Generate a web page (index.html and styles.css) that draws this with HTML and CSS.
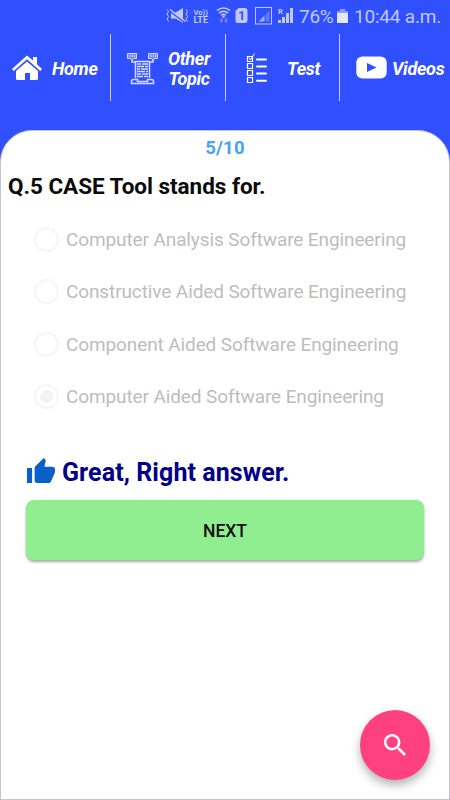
FILE: index.html
```html
<!DOCTYPE html>
<html lang="en">
<head>
<meta charset="utf-8">
<title>Quiz</title>
<link rel="stylesheet" href="styles.css">
</head>
<body>
<div class="screen">
  <header class="status">
    <svg class="status-icons" width="132" height="32" viewBox="0 0 132 32">
      <g fill="currentColor">
        <path d="M6 12.500h4.500L18 8v15l-7.500-4.500H6z"/>
        <text x="28.500" y="15" font-size="7" font-weight="700" textLength="14.500" lengthAdjust="spacingAndGlyphs">Vo))</text>
        <text x="28.500" y="23.300" font-size="8.200" font-weight="700" textLength="14.500" lengthAdjust="spacingAndGlyphs">LTE</text>
        <path d="M73 8h6q3 0 3 3v9q0 3-3 3h-7q-2 0-2-2V11z" transform="translate(.5 0)"/>
        <text x="113" y="14" font-size="7.500" font-weight="700">R</text>
        <path d="M113 20h3v3h-3zM117 17h3v6h-3zM121 13h3v10h-3zM125 8h3v15h-3z"/>
        <path d="M104.500 21.500V10.500l-4 4v7z" opacity=".35"/>
        <path d="M99.500 15.500l-6 6h6z" opacity=".8"/>
        <path d="M56.500 18l2 2.500h-1.300V23h-1.400v-2.500h-1.300zM61 23l2-2.500h-1.300V18h-1.400v2.500H59z" opacity=".5"/>
        <circle cx="58.500" cy="16.500" r="1.200"/>
      </g>
      <path d="M4.500 11L19 22" stroke="#304ffe" stroke-width="1.500"/>
      <path d="M5 9.500L20.500 21.500" fill="none" stroke="currentColor" stroke-width="1.400"/>
      <path d="M2 9.500l1.500 2L2 14l1.500 2.500L2 19l1.500 2.500M21 9.500l1.500 2L21 14l1.500 2.500L21 19l1.500 2.500" fill="none" stroke="currentColor"/>
      <path d="M52 10.500q6.500-5 13 0M54 13q4.500-3.500 9 0" fill="none" stroke="currentColor" stroke-width="1.600"/>
      <path d="M56 15.300q2.500-2 5 0" fill="none" stroke="currentColor" stroke-width="1.400"/>
      <rect x="90.500" y="7.500" width="16" height="16.500" fill="none" stroke="currentColor"/>
      <text x="73.200" y="20" font-size="12" font-weight="700" fill="#304ffe">1</text>
    </svg>
    <span class="percent">76%</span>
    <svg class="battery" width="11" height="16" viewBox="0 0 11 16"><path d="M3 1h5v2h3v2H0V3h3z" fill="#8d9fff"/><path d="M0 5h11v10H0z" fill="#e4e8ff"/></svg>
    <span class="clock">10:44 a.m.</span>
  </header>
  <nav class="nav">
    <a class="tab home">
      <svg width="32" height="28" viewBox="0 0 32 28" fill="#fff"><path d="M1 15L16 1.500l6 5V3h4v7.200l5 4.800-1.700 2L16 5.200 2.700 17z"/><path d="M5 17L16 7.500 27 17v7.500q0 1.500-1.500 1.500H19v-7h-5v7H6.500Q5 26 5 24.500z"/></svg>
      <span>Home</span>
    </a>
    <a class="tab topic">
      <svg width="32" height="34" viewBox="0 0 32 34" fill="none" stroke="#d5dcff">
        <path d="M1.500 2.500h9v5h-3l-1.500 2-1.500-2h-3zM22.500 2.500h9v5h-3l-1.500 2-1.500-2h-3z" fill="#7186ff"/>
        <path d="M3.500 5h1M6 5h1M8 5h1M24.500 5h1M27 5h1M29 5h1" stroke-width="2"/>
        <path d="M6 9v2h3M27 9v2h-3M9.500 27V10.500h14V27M5.500 32.500v-2q0-2 2-2h4v2h10v-2h4q2 0 2 2v2z" stroke-width="1.500"/>
        <path d="M11 13h4m1 0h6M11 15.500h7m1 0h3M11 18h3m1 0h7M11 20.500h8m1 0h2M11 23h4m1 0h6M11 25.500h6m1 0h4" stroke-width="1.300"/>
      </svg>
      <span>Other<br>Topic</span>
    </a>
    <a class="tab test">
      <svg width="22" height="34" viewBox="0 0 22 34" fill="none" stroke="#fff">
        <path d="M1.500 5.500h5v5h-5zM1.500 12.500h5v5h-5zM1.500 19.500h5v5h-5zM1.500 26.500h5v5h-5z" stroke-width="1.200"/>
        <path d="M3 6.500l1.500 2.500L8.500 2.500"/>
        <path d="M11 8.500h9M11 15.500h9M11 22.500h9M11 29.700h9" stroke-width="2" stroke-linecap="round"/>
      </svg>
      <span>Test</span>
    </a>
    <a class="tab videos">
      <svg width="31" height="23" viewBox="0 0 31 23"><rect x=".3" y=".5" width="30.400" height="22" rx="6" fill="#fff"/><path d="M11 7l9.500 4.500L11 16z" fill="#304ffe"/></svg>
      <span>Videos</span>
    </a>
  </nav>
  <main class="card">
    <div class="progress">5/10</div>
    <h1 class="question">Q.5 CASE Tool stands for.</h1>
    <ul class="options">
      <li><i class="radio"></i><span>Computer Analysis Software Engineering</span></li>
      <li><i class="radio"></i><span>Constructive Aided Software Engineering</span></li>
      <li><i class="radio"></i><span>Component Aided Software Engineering</span></li>
      <li><i class="radio checked"></i><span>Computer Aided Software Engineering</span></li>
    </ul>
    <div class="result">
      <svg width="28" height="25" viewBox="1 1 22 20" preserveAspectRatio="none" fill="#0860c8"><path d="M1 21h4V9H1v12zm22-11c0-1.100-.9-2-2-2h-6.310l.95-4.570.03-.32c0-.41-.17-.79-.44-1.060L14.170 1 7.590 7.590C7.220 7.950 7 8.450 7 9v10c0 1.100.9 2 2 2h9c.83 0 1.540-.5 1.840-1.220l3.020-7.050c.09-.23.14-.47.14-.73v-2z"/></svg>
      <span>Great, Right answer.</span>
    </div>
    <button class="next">NEXT</button>
  </main>
  <button class="fab" aria-label="Search">
    <svg width="22" height="22" viewBox="3 3 17.500 17.500" fill="#fff"><path d="M15.500 14h-.79l-.28-.27C15.410 12.590 16 11.110 16 9.500 16 5.910 13.090 3 9.500 3S3 5.910 3 9.500 5.910 16 9.500 16c1.610 0 3.090-.59 4.230-1.570l.27.28v.79l5 4.990L20.490 19l-4.990-5zm-6 0C7.010 14 5 11.990 5 9.500S7.010 5 9.500 5 14 7.010 14 9.500 11.990 14 9.500 14z"/></svg>
  </button>
</div>
</body>
</html>
```

FILE: styles.css
```css
* { box-sizing: border-box; }
body { margin: 0; font-family: Roboto, "Liberation Sans", sans-serif; }
.screen {
  position: relative;
  display: flex;
  flex-direction: column;
  width: 450px;
  height: 800px;
  overflow: hidden;
  background: #304ffe;
}
.status {
  display: flex;
  align-items: center;
  height: 34px;
  padding: 0 0 2px 165px;
  color: #bfc9ff;
  white-space: nowrap;
}
.status-icons { flex: none; }
.percent { width: 37px; margin-left: 2px; font-size: 19px; letter-spacing: -.3px; }
.battery { flex: none; margin-left: 1px; }
.clock { margin-left: 6px; font-size: 19px; letter-spacing: -.2px; }
.nav {
  display: grid;
  grid-template-columns: 111px 115px 114px 110px;
  height: 67px;
  margin-bottom: 29px;
}
.tab {
  display: flex;
  align-items: center;
  padding-top: 2px;
  border-right: 1px solid #c7d0ff;
  color: #fff;
  font-size: 18px;
  font-style: italic;
  font-weight: 700;
  line-height: 20px;
  letter-spacing: -.3px;
  text-align: center;
}
.tab svg { flex: none; margin-top: -2px; }
.home { padding-left: 11px; gap: 9px; }
.topic { padding-left: 15px; gap: 10px; }
.test { padding-left: 20px; gap: 19px; }
.videos { padding-left: 16px; gap: 5px; border: 0; }
.card {
  flex: 1;
  display: flex;
  flex-direction: column;
  padding: 7px 25px 0;
  background: #fff;
  border: 1px solid #c5c5cd;
  border-radius: 32px 32px 0 0;
}
.progress {
  height: 21px;
  color: #48a3f5;
  font-size: 18.5px;
  font-weight: 700;
  line-height: 21px;
  letter-spacing: .2px;
  text-align: center;
}
.question {
  margin: 13px 0 0 -18px;
  color: #0c0c0c;
  font-size: 22.5px;
  font-weight: 700;
  line-height: 28px;
  letter-spacing: -.03px;
  white-space: nowrap;
}
.options { margin: 13px 0 0; padding: 0 0 0 8px; list-style: none; }
.options li {
  display: flex;
  align-items: center;
  gap: 7px;
  height: 52.5px;
  color: #bdbdbd;
  font-size: 19px;
  letter-spacing: -.11px;
  white-space: nowrap;
}
.radio {
  display: grid;
  place-items: center;
  width: 25px;
  height: 25px;
  border: 2px solid #f5f5f5;
  border-radius: 50%;
}
.checked::after {
  content: "";
  width: 13px;
  height: 13px;
  border-radius: 50%;
  background: #f3f3f3;
}
.result {
  display: flex;
  align-items: center;
  gap: 7px;
  height: 30px;
  margin: 34px 0 13px 1px;
  color: #00008b;
  font-size: 25px;
  font-weight: 700;
  letter-spacing: .08px;
  white-space: nowrap;
}
.result svg { margin-bottom: 4px; }
.next {
  width: 398px;
  height: 60px;
  padding: 2px 0 0;
  border: 0;
  border-radius: 8px;
  background: #90ee90;
  box-shadow: 0 2px 3px rgba(0, 0, 0, .35);
  color: #111;
  font: 500 17.500px Roboto, sans-serif;
}
.fab {
  position: absolute;
  left: 360px;
  top: 710px;
  display: grid;
  place-items: center;
  width: 70px;
  height: 70px;
  padding: 0;
  border: 0;
  border-radius: 50%;
  background: #ff4081;
  box-shadow: 0 5px 10px rgba(0, 0, 0, .3);
}
```
